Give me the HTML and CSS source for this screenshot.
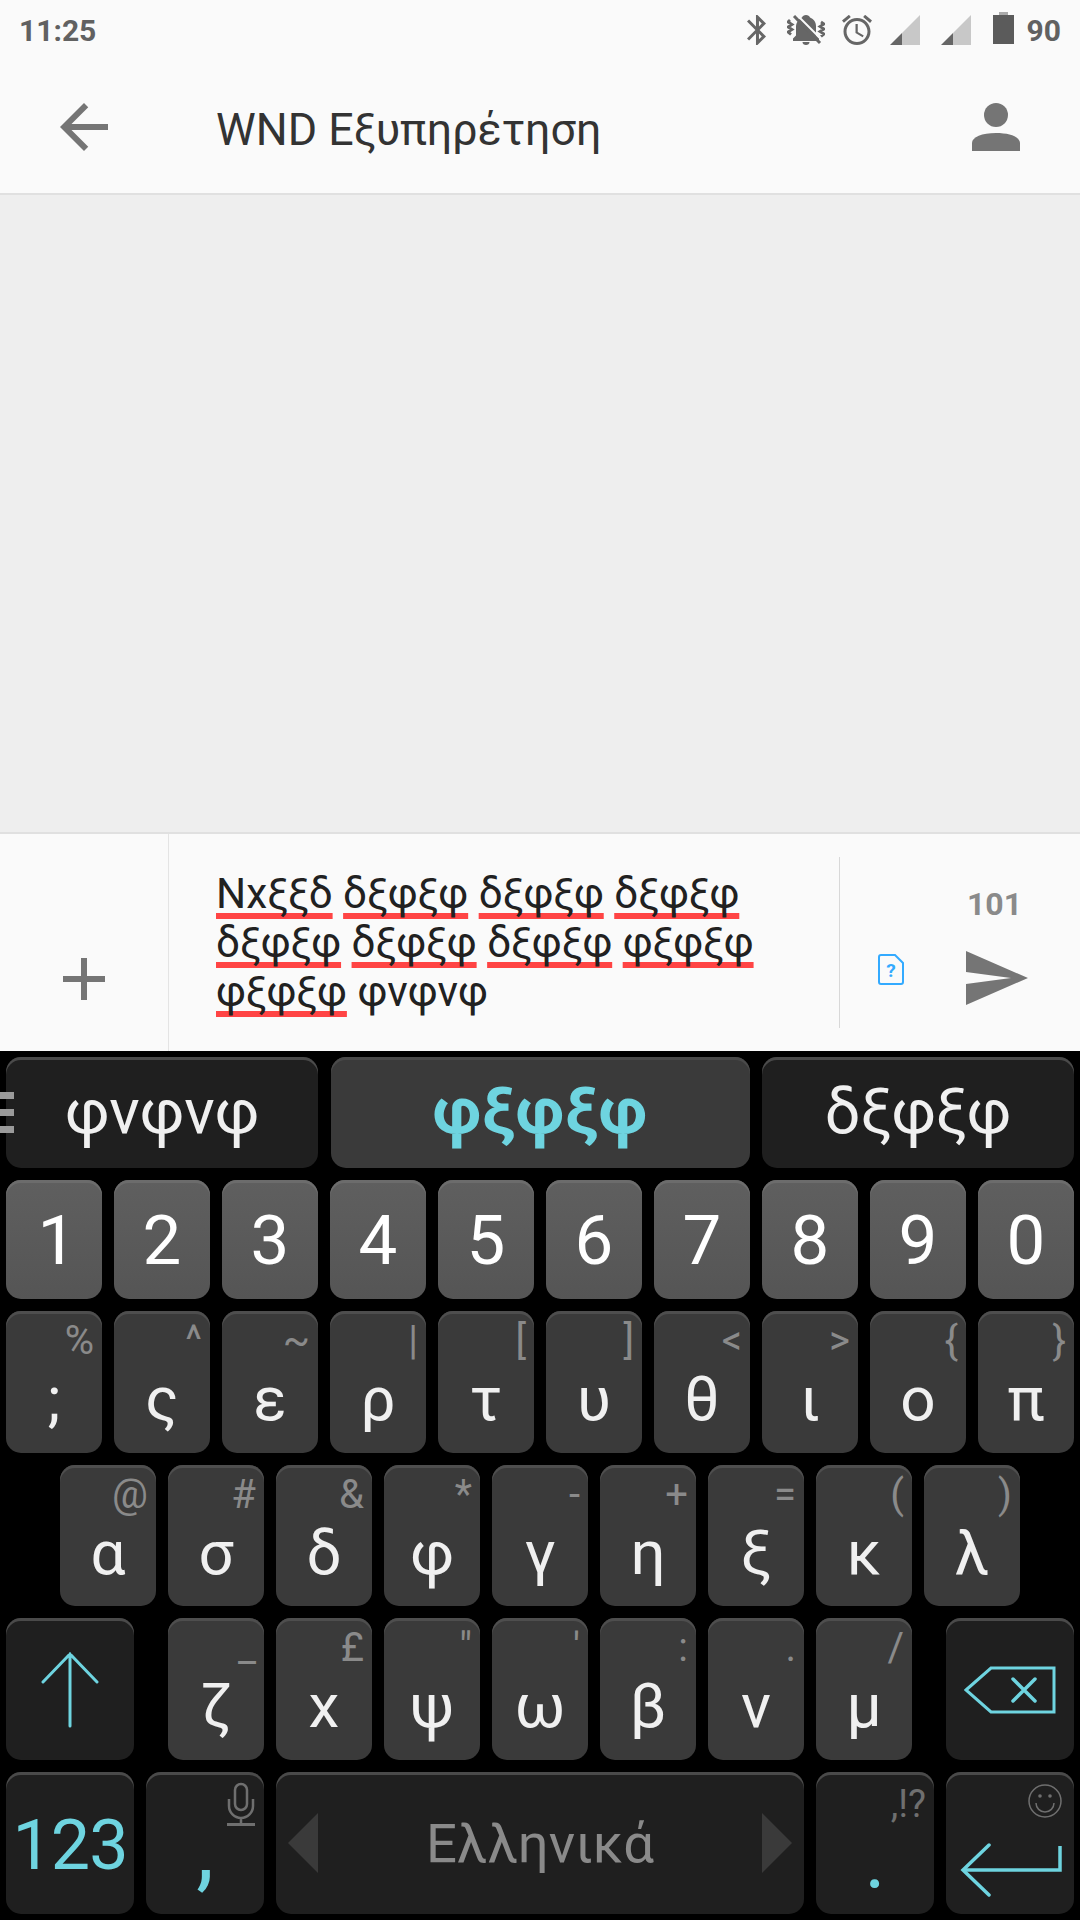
FILE: index.html
```html
<!DOCTYPE html>
<html lang="el">
<head>
    <meta charset="UTF-8">
    <meta name="viewport" content="width=device-width, initial-scale=1.0">
    <title>WND Εξυπηρέτηση</title>
    <link rel="stylesheet" href="styles.css">
</head>
<body>
    <div class="status-bar">
        <span class="time">11:25</span>
        <div class="status-icons">
            <svg class="st-bt" width="19" height="30" viewBox="5 2 12.7 20" preserveAspectRatio="none"><path fill="#666" d="M17.71 7.71L12 2h-1v7.59L6.41 5 5 6.41 10.59 12 5 17.59 6.41 19 11 14.41V22h1l5.71-5.71-4.3-4.29 4.3-4.29zM13 5.83l1.88 1.88L13 9.59V5.83zm1.88 10.46L13 18.17v-3.76l1.88 1.88z"/></svg>
            <svg class="st-bell" width="38" height="30" viewBox="0 0 38 30">
                <path fill="#666" d="M19 0c2 0 3.500 1 4 2.500c4 1.500 6 5 6 9v9l3 3v2.500H6V23.500l3-3v-9c0-3 2-7 6-9c.5-1.500 2-2.500 4-2.500z"/>
                <path fill="#666" d="M15.500 27h7c0 2-1.500 3-3.500 3s-3.500-1-3.500-3z"/>
                <path stroke="#fafafa" stroke-width="2" fill="none" d="M10 0l24 24"/>
                <path stroke="#666" stroke-width="3" fill="none" d="M7 1l26 27"/>
                <path stroke="#666" stroke-width="2.800" fill="none" d="M3 5L1 7l4 2.500-4 2.500 4 2.500-4 2.500 3 2.500M34 7l3 2-4 2.500 4 2.500-4 2.500 4 2.500-3 2.500"/>
            </svg>
            <svg class="st-alarm" width="30" height="30" viewBox="2 2 20 20"><path fill="#666" d="M22 5.720l-4.600-3.860-1.290 1.530 4.600 3.860L22 5.720zM7.880 3.390L6.600 1.860 2 5.710l1.290 1.530 4.590-3.850zM12.500 8H11v6l4.750 2.850.75-1.230-4-2.370V8zM12 4c-4.970 0-9 4.030-9 9s4.030 9 9 9 9-4.030 9-9-4.030-9-9-9zm0 16c-3.870 0-7-3.130-7-7s3.130-7 7-7 7 3.130 7 7-3.130 7-7 7z"/></svg>
            <svg class="st-sig1" width="30" height="30" viewBox="0 0 30 30"><path fill="#c8c8c8" d="M12 18L30 0v30H12z"/><path fill="#666" d="M0 30l12-12v12z"/></svg>
            <svg class="st-sig2" width="30" height="30" viewBox="0 0 30 30"><path fill="#c8c8c8" d="M12 18L30 0v30H12z"/><path fill="#666" d="M0 30l12-12v12z"/></svg>
            <div class="battery"><i class="battery-cap"></i><i class="battery-body"></i></div>
            <span class="level">90</span>
        </div>
    </div>

    <div class="app-bar">
        <svg class="back" width="72" height="72" viewBox="0 0 24 24"><path fill="#757575" d="M20 11H7.830l5.590-5.590L12 4l-8 8 8 8 1.410-1.410L7.830 13H20v-2z"/></svg>
        <h1 class="title">WND Εξυπηρέτηση</h1>
        <svg class="person" width="48" height="48" viewBox="0 0 48 48"><circle cx="24" cy="12" r="12" fill="#757575"/><path fill="#757575" d="M0 48v-8c0-6 10-10 24-10s24 4 24 10v8z"/></svg>
    </div>

    <div class="thread"></div>

    <div class="composer">
        <div class="attach">
            <svg width="42" height="42" viewBox="0 0 42 42"><path fill="#757575" d="M18 0h6v18h18v6H24v18h-6V24H0v-6h18z"/></svg>
        </div>
        <div class="message">
            <span class="typo">Νxξξδ</span> <span class="typo">δξφξφ</span> <span class="typo">δξφξφ</span> <span class="typo">δξφξφ</span> <span class="typo">δξφξφ</span> <span class="typo">δξφξφ</span> <span class="typo">δξφξφ</span> <span class="typo">φξφξφ</span> <span class="typo">φξφξφ</span> φνφνφ
        </div>
        <div class="send-box">
            <span class="count">101</span>
            <div class="send-row">
                <svg width="26" height="31" viewBox="0 0 26 31"><path fill="none" stroke="#33aaff" stroke-width="2" d="M3 1h14l8 8v19a2 2 0 0 1-2 2H3a2 2 0 0 1-2-2V3a2 2 0 0 1 2-2z"/><text x="13" y="23" text-anchor="middle" class="sim-mark">?</text></svg>
                <svg width="62" height="54" viewBox="0 0 62 54"><path fill="#757575" d="M0 0l62 27L0 54V33l45-6L0 21z"/></svg>
            </div>
        </div>
    </div>

    <div class="keyboard">
        <div class="handle"><i></i><i></i><i></i></div>

        <div class="row suggestions">
            <div class="suggestion">φνφνφ</div>
            <div class="suggestion best">φξφξφ</div>
            <div class="suggestion">δξφξφ</div>
        </div>

        <div class="row digits">
            <div class="key digit">1</div>
            <div class="key digit">2</div>
            <div class="key digit">3</div>
            <div class="key digit">4</div>
            <div class="key digit">5</div>
            <div class="key digit">6</div>
            <div class="key digit">7</div>
            <div class="key digit">8</div>
            <div class="key digit">9</div>
            <div class="key digit">0</div>
        </div>

        <div class="row">
            <div class="key letter"><span class="hint">%</span>;</div>
            <div class="key letter"><span class="hint">^</span>ς</div>
            <div class="key letter"><span class="hint">~</span>ε</div>
            <div class="key letter"><span class="hint">|</span>ρ</div>
            <div class="key letter"><span class="hint">[</span>τ</div>
            <div class="key letter"><span class="hint">]</span>υ</div>
            <div class="key letter"><span class="hint">&lt;</span>θ</div>
            <div class="key letter"><span class="hint">&gt;</span>ι</div>
            <div class="key letter"><span class="hint">{</span>ο</div>
            <div class="key letter"><span class="hint">}</span>π</div>
        </div>

        <div class="row indented">
            <div class="key letter"><span class="hint">@</span>α</div>
            <div class="key letter"><span class="hint">#</span>σ</div>
            <div class="key letter"><span class="hint">&amp;</span>δ</div>
            <div class="key letter"><span class="hint">*</span>φ</div>
            <div class="key letter"><span class="hint">-</span>γ</div>
            <div class="key letter"><span class="hint">+</span>η</div>
            <div class="key letter"><span class="hint">=</span>ξ</div>
            <div class="key letter"><span class="hint">(</span>κ</div>
            <div class="key letter"><span class="hint">)</span>λ</div>
        </div>

        <div class="row">
            <div class="key fn wide shift">
                <svg width="58" height="76" viewBox="0 0 58 76"><path fill="none" stroke="#6ed4e0" stroke-width="3" stroke-linecap="round" d="M29 74V2M2 30L29 2l27 28"/></svg>
            </div>
            <div class="key letter after-shift"><span class="hint">_</span>ζ</div>
            <div class="key letter"><span class="hint">£</span>x</div>
            <div class="key letter"><span class="hint">"</span>ψ</div>
            <div class="key letter"><span class="hint">'</span>ω</div>
            <div class="key letter"><span class="hint">:</span>β</div>
            <div class="key letter"><span class="hint">.</span>ν</div>
            <div class="key letter"><span class="hint">/</span>μ</div>
            <div class="key fn wide backspace">
                <svg width="92" height="48" viewBox="0 0 92 48"><path fill="none" stroke="#6ed4e0" stroke-width="3" d="M2 24L27 2h63v44H27z"/><path fill="none" stroke="#6ed4e0" stroke-width="3.500" stroke-linecap="round" d="M49 13l22 22M71 13L49 35"/></svg>
            </div>
        </div>

        <div class="row">
            <div class="key fn wide mode">123</div>
            <div class="key fn comma">
                <svg class="mic" width="28" height="44" viewBox="0 0 28 44"><path fill="none" stroke="#6f6f6f" stroke-width="2.500" d="M8 8a6 6 0 0 1 12 0v14a6 6 0 0 1-12 0zM2 17v7a12 12 0 0 0 24 0v-7M14 36v6"/><path fill="#6f6f6f" d="M0 41h28v3H0z"/></svg>
                ,
            </div>
            <div class="key fn space">
                <svg width="30" height="60" viewBox="0 0 30 60"><path fill="#3a3a3a" d="M30 0v60L0 30z"/></svg>
                <span class="lang">Ελληνικά</span>
                <svg width="30" height="60" viewBox="0 0 30 60"><path fill="#3a3a3a" d="M0 0v60l30-30z"/></svg>
            </div>
            <div class="key fn period"><span class="hint small">,!?</span>.</div>
            <div class="key fn wide enter">
                <svg class="smile" width="34" height="34" viewBox="0 0 34 34"><g fill="none" stroke="#6f6f6f" stroke-width="1.500"><circle cx="17" cy="17" r="16"/><path d="M8 19a9 9 0 0 0 18 0"/></g><circle cx="12" cy="12" r="1.800" fill="#6f6f6f"/><circle cx="22" cy="12" r="1.800" fill="#6f6f6f"/></svg>
                <svg class="return" width="102" height="54" viewBox="0 0 102 54"><path fill="none" stroke="#6ed4e0" stroke-width="3.500" d="M100 3v24H4"/><path fill="none" stroke="#6ed4e0" stroke-width="3.500" stroke-linecap="round" d="M29 2L3 27l26 25"/></svg>
            </div>
        </div>
    </div>
</body>
</html>
```

FILE: styles.css
```css
* {
    margin: 0;
    padding: 0;
    box-sizing: border-box;
}

body {
    width: 1080px;
    height: 1920px;
    overflow: hidden;
    background: #000;
    font-family: 'Roboto', 'Noto Sans', sans-serif;
    display: flex;
    flex-direction: column;
}

/* status bar */
.status-bar {
    height: 63px;
    padding: 0 19px;
    background: #fafafa;
    display: flex;
    justify-content: space-between;
    align-items: flex-start;
    color: #616161;
    font-size: 30px;
    font-weight: 700;
    line-height: 62px;
}

.status-icons {
    display: flex;
    align-items: flex-start;
    padding-top: 15px;
    line-height: 32px;
}

.st-bell { margin-left: 21px; }
.st-alarm { margin-left: 17px; }
.st-sig1 { margin-left: 18px; }
.st-sig2 { margin-left: 21px; }

.battery {
    margin: -3px 0 0 22px;
    width: 21px;
    display: flex;
    flex-direction: column;
    align-items: center;
}

.battery-cap {
    width: 9px;
    height: 3px;
    background: #aaa;
}

.battery-body {
    width: 21px;
    height: 29px;
    background: #5b5b5b;
}

.level {
    margin-left: 13px;
}

/* app bar */
.app-bar {
    height: 132px;
    background: #fafafa;
    border-bottom: 2px solid #e0e0e0;
    display: flex;
    align-items: center;
}

.back {
    margin-left: 48px;
    margin-top: -2px;
}

.title {
    margin-left: 96px;
    flex: 1;
    font-size: 44.800px;
    font-weight: 400;
    color: #333;
    margin-top: 3px;
}

.person {
    margin-right: 60px;
    margin-top: -2px;
}

.thread {
    height: 637px;
    background: #eee;
}

/* message box */
.composer {
    height: 219px;
    background: #fafafa;
    border-top: 2px solid #e0e0e0;
    display: flex;
}

.attach {
    width: 169px;
    border-right: 1px solid #e4e4e4;
    padding: 124px 0 0 63px;
}

.message {
    width: 670px;
    padding: 35px 10px 0 47px;
    font-size: 42.300px;
    line-height: 49px;
    color: #212121;
}

.typo {
    text-decoration: underline 6px #ff4444;
    text-decoration-skip-ink: none;
    text-underline-offset: 5px;
}

.send-box {
    flex: 1;
    margin-top: 23px;
    height: 171px;
    border-left: 1px solid #d8d8d8;
    display: flex;
    flex-direction: column;
}

.count {
    margin: 28px 0 0 127px;
    font-size: 32px;
    font-weight: 700;
    line-height: 38px;
    color: #8a8a8a;
}

.send-row {
    margin: 28px 0 0 38px;
    display: flex;
    align-items: flex-start;
    gap: 62px;
}

.send-row svg:first-child {
    margin-top: 3px;
}

.sim-mark {
    font-size: 19px;
    font-weight: 700;
    fill: #33aaff;
}

/* keyboard */
.keyboard {
    flex: 1;
    position: relative;
    padding: 6px 6px 0;
    display: flex;
    flex-direction: column;
    gap: 12px;
}

.handle {
    position: absolute;
    left: 0;
    top: 41px;
    display: flex;
    flex-direction: column;
    gap: 10px;
    z-index: 2;
}

.handle i {
    display: block;
    width: 14px;
    height: 7px;
    background: #9a9a9a;
}

.row {
    display: flex;
    gap: 12px;
    height: 141.700px;
}

.suggestions {
    height: 111px;
    gap: 12.500px;
}

.digits {
    height: 119px;
}

.indented {
    padding-left: 54px;
}

.suggestion {
    width: 312px;
    background: #1f1f1f;
    border-radius: 15px;
    box-shadow: inset 0 3px 0 #4a4a4a;
    color: #f0f0f0;
    font-size: 63px;
    line-height: 109px;
    text-align: center;
}

.best {
    width: 419px;
    background: #3a3a3a;
    color: #6ed4e0;
    font-weight: 700;
    font-size: 65px;
}

.key {
    position: relative;
    width: 96px;
    border-radius: 15px;
    text-align: center;
}

.digit {
    background: linear-gradient(#5f5f5f, #555);
    box-shadow: inset 0 3px 0 #6c6c6c;
    color: #fff;
    font-size: 69px;
    line-height: 121px;
}

.digit:first-child {
    padding-left: 6px;
}

.letter {
    background: #3a3a3a;
    box-shadow: inset 0 3px 0 #4e4e4e;
    color: #f0f0f0;
    font-size: 62px;
    line-height: 80px;
    padding-top: 48px;
}

.hint {
    position: absolute;
    top: 6px;
    right: 8px;
    font-size: 40px;
    line-height: 48px;
    color: #8a8a8a;
}

.fn {
    background: #1f1f1f;
    box-shadow: inset 0 3px 0 #4a4a4a;
}

.wide {
    width: 128px;
}

.after-shift {
    margin-left: 22px;
}

.shift {
    padding-top: 34px;
}

.backspace {
    margin-left: 22px;
    padding-top: 48px;
}

.mode {
    color: #6ed4e0;
    font-size: 70px;
    line-height: 146px;
    letter-spacing: -1px;
}

.comma {
    width: 118px;
    color: #6ed4e0;
    font-size: 90px;
    line-height: 80px;
    padding-top: 38px;
}

.mic {
    position: absolute;
    top: 10px;
    right: 9px;
}

.space {
    width: 528px;
    padding: 0 12px;
    display: flex;
    justify-content: space-between;
    align-items: center;
}

.lang {
    font-size: 54.500px;
    color: #8a8a8a;
}

.period {
    width: 118px;
    color: #6ed4e0;
    font-size: 80px;
    line-height: 80px;
    padding-top: 49px;
}

.small {
    top: 8px;
    right: 8px;
    color: #6f6f6f;
    font-size: 38px;
}

.smile {
    position: absolute;
    top: 12px;
    right: 12px;
}

.return {
    position: absolute;
    top: 71px;
    left: 14px;
}
```
